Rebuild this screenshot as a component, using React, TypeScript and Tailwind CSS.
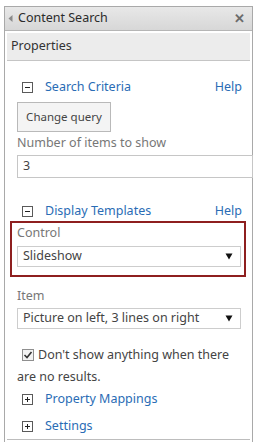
import React from "react";

const font = { fontFamily: '"Noto Sans", "Open Sans", sans-serif' };

function Box({ plus }: { plus?: boolean }) {
  return (
    <svg width="11" height="11" viewBox="0 0 11 11" className="shrink-0">
      <rect x="0.5" y="0.5" width="10" height="10" fill="#fff" stroke="#5a5a5a" />
      <line x1="3" y1="5.5" x2="8" y2="5.5" stroke="#222" />
      {plus && <line x1="5.5" y1="3" x2="5.5" y2="8" stroke="#222" />}
    </svg>
  );
}

function Arrow() {
  return (
    <svg width="8" height="7" viewBox="0 0 8 7" className="shrink-0">
      <path d="M0.5 0.5 L7.5 0.5 L4 6.5 Z" fill="#111" />
    </svg>
  );
}

export default function App() {
  return (
    <div className="w-[260px] h-[442px] bg-white overflow-hidden pt-[6px] pl-[4px] text-[12.5px]" style={font}>
      <div className="w-[249px] h-[440px] border-l border-r border-t border-[#a9a9a9] flex flex-col">
        <div className="h-[24px] border-b border-[#b5b5b5] bg-gradient-to-b from-[#e8e8e8] to-[#d7d7d7] flex items-center pl-[3px] pr-[7px]">
          <svg width="5" height="7" viewBox="0 0 5 7" className="shrink-0">
            <path d="M4.5 0 L4.5 7 L0.5 3.5 Z" fill="#8a8a8a" />
          </svg>
          <span className="ml-[5px] text-[12.5px] text-[#2b2b2b] leading-none">Content Search</span>
          <span className="ml-auto text-[#6b6b6b] font-bold text-[13px] leading-none">✕</span>
        </div>
        <div className="mx-[2px] mt-[2px] h-[28px] bg-[#ececec] border-b border-[#c5c5c5] flex items-center pl-[4px]">
          <span className="text-[12.5px] text-[#333] leading-none">Properties</span>
        </div>

        <div className="pl-[12px] flex flex-col">
          <div className="mt-[16px] h-[20px] flex items-center pl-[5px] pr-[10px]">
            <Box />
            <span className="ml-[12px] text-[#2a6cb5]">Search Criteria</span>
            <span className="ml-auto text-[#2a6cb5]">Help</span>
          </div>
          <div className="mt-[5px] h-[30px] w-[94px] border border-[#b9b9b9] bg-[#f4f4f4] flex items-center justify-center text-[#444] text-[11.5px]">
            Change query
          </div>
          <div className="mt-[2px] h-[18px] flex items-center text-[#777]">Number of items to show</div>
          <div className="mt-[3px] h-[23px] w-[236px] border border-[#c6c6c6] bg-white flex items-center pl-[5px] text-[#444]">
            3
          </div>

          <div className="mt-[23px] h-[20px] flex items-center pl-[5px] pr-[10px]">
            <Box />
            <span className="ml-[12px] text-[#2a6cb5]">Display Templates</span>
            <span className="ml-auto text-[#2a6cb5]">Help</span>
          </div>
          <div className="-ml-[7px] w-[236px] h-[56px] border-2 border-[#8e1f1f] pl-[5px] flex flex-col">
            <div className="mt-[1px] h-[18px] flex items-center text-[#777]">Control</div>
            <div className="mt-[4px] h-[21px] w-[224px] border border-[#cdcdcd] bg-white flex items-center pl-[5px] pr-[7px] text-[#444]">
              <span>Slideshow</span>
              <span className="ml-auto"><Arrow /></span>
            </div>
          </div>

          <div className="mt-[10px] h-[18px] flex items-center text-[#777]">Item</div>
          <div className="mt-[3px] h-[21px] w-[224px] border border-[#cdcdcd] bg-white flex items-center pl-[5px] pr-[7px] text-[#444]">
            <span>Picture on left, 3 lines on right</span>
            <span className="ml-auto"><Arrow /></span>
          </div>

          <div className="mt-[15px] w-[222px] leading-[22px] text-[#444]">
            <span className="inline-block align-middle ml-[5px] mr-[4px] -mt-[2px]">
              <svg width="12" height="12" viewBox="0 0 12 12">
                <rect x="0.5" y="0.5" width="11" height="11" fill="#f2f2f2" stroke="#8f8f8f" />
                <path d="M2.5 6 L5 8.5 L9.5 3" fill="none" stroke="#333" strokeWidth="1.6" />
              </svg>
            </span>
            Don't show anything when there are no results.
          </div>

          <div className="mt-[1px] h-[20px] flex items-center pl-[5px]">
            <Box plus />
            <span className="ml-[12px] text-[#2a6cb5]">Property Mappings</span>
          </div>
          <div className="mt-[7px] h-[20px] flex items-center pl-[5px]">
            <Box plus />
            <span className="ml-[12px] text-[#2a6cb5]">Settings</span>
          </div>
        </div>
        <div className="mt-[3px] mx-[2px] border-t border-[#bdbdbd]" />
      </div>
    </div>
  );
}
